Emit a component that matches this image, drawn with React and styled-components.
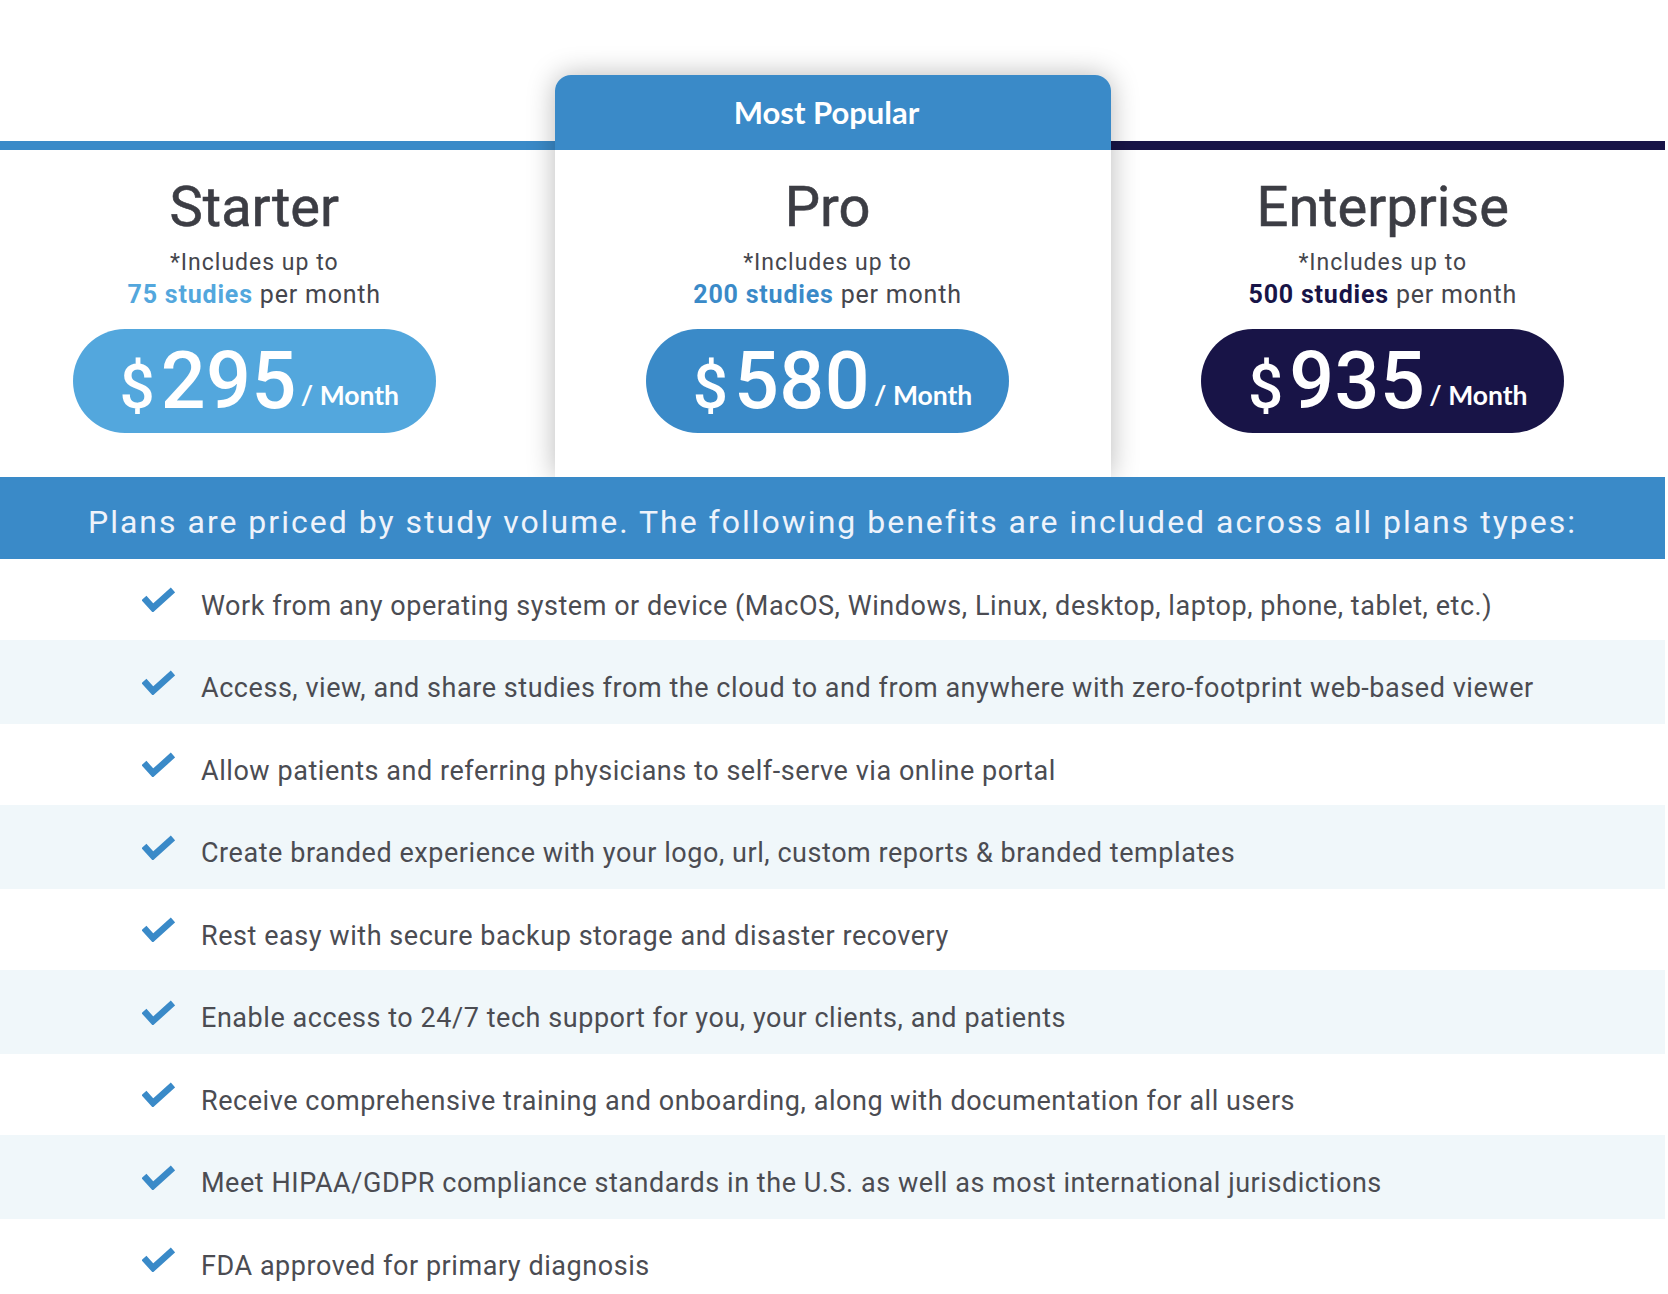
import React from 'react'
import styled, { createGlobalStyle } from 'styled-components'

const GlobalStyle = createGlobalStyle`
  body {
    margin: 0;
    background: #fff;
    font-family: Roboto, "Liberation Sans", sans-serif;
    overflow: hidden;
  }
`

const Page = styled.div`
  width: 1665px;
`

const Plans = styled.section`
  display: grid;
  grid-template-columns: 1fr 556px 1fr;
  padding-top: 75px;
`

const Column = styled.div`
  margin-top: ${(p) => (p.line ? 66 : 0)}px;
  border-top: ${(p) => (p.line ? `9px solid ${p.line}` : 'none')};
  padding-right: ${(p) => p.padRight || 0}px;
  display: flex;
  flex-direction: column;
  align-items: center;
`

const Card = styled.div`
  position: relative;
  z-index: 1;
  background: #fff;
  border-radius: 16px 16px 0 0;
  box-shadow: 0 0 28px rgba(0, 0, 0, 0.28);
`

const CardHeader = styled.div`
  height: 75px;
  padding-right: 12px;
  border-radius: 16px 16px 0 0;
  background: #3a8ac8;
  color: #fff;
  font-family: Lato, "Open Sans", sans-serif;
  font-weight: 700;
  font-size: 31px;
  line-height: 75px;
  text-align: center;
`

const Title = styled.h2`
  margin: 22px 0 0;
  font-size: 56px;
  line-height: 70px;
  font-weight: 400;
  letter-spacing: 0;
  color: #3c3d44;
  -webkit-text-stroke: 0.6px #3c3d44;
`

const Includes = styled.div`
  margin-top: 5px;
  font-size: 23px;
  line-height: 32px;
  letter-spacing: 1px;
  color: #45464d;
  text-align: center;
`

const Volume = styled.div`
  font-size: 25px;
  line-height: 32px;
  letter-spacing: 0.8px;
  color: #45464d;
  text-align: center;

  strong {
    font-weight: 700;
    color: ${(p) => p.accent};
  }
`

const Pill = styled.div`
  margin: 18px 0 44px;
  width: 363px;
  height: 104px;
  border-radius: 52px;
  background: ${(p) => p.accent};
  color: #fff;
  font-size: 79px;
  line-height: 104px;
  text-align: center;
  padding-left: 10px;
  box-sizing: border-box;
  white-space: nowrap;
`

const Dollar = styled.span`
  font-size: 62px;
  font-weight: 500;
  margin-right: 6px;
`

const Amount = styled.span`
  font-weight: 500;
  letter-spacing: 0.5px;
`

const Per = styled.span`
  font-family: Lato, "Open Sans", sans-serif;
  font-weight: 700;
  font-size: 26.5px;
  margin-left: 4px;
  vertical-align: 3px;
`

const Banner = styled.div`
  position: relative;
  z-index: 2;
  height: 82px;
  box-sizing: border-box;
  padding-top: 9px;
  background: #3a8ac8;
  color: #eef3fb;
  font-size: 32px;
  line-height: 73px;
  letter-spacing: 2px;
  text-align: center;
  white-space: nowrap;
`

const Features = styled.ul`
  list-style: none;
  margin: 0;
  padding: 0;
`

const Feature = styled.li`
  display: flex;
  align-items: center;
  gap: 26px;
  height: ${(p) => (p.tinted ? 84 : 81)}px;
  box-sizing: border-box;
  padding: 12px 0 0 142px;
  background: ${(p) => (p.tinted ? '#f0f7fa' : '#fff')};
  font-size: 27px;
  letter-spacing: 0.55px;
  color: #4b4c52;
  white-space: nowrap;
`

const Check = styled.svg`
  flex: none;
  width: 33px;
  height: 25px;
  margin-bottom: 12px;
`

const plans = [
  { name: 'Starter', studies: '75', price: '295', accent: '#53a7dd', line: '#3a8ac8', padRight: 46 },
  { name: 'Pro', studies: '200', price: '580', accent: '#3a8ac8', padRight: 10, popular: true },
  { name: 'Enterprise', studies: '500', price: '935', accent: '#181447', line: '#181447', padRight: 10 },
]

const features = [
  'Work from any operating system or device (MacOS, Windows, Linux, desktop, laptop, phone, tablet, etc.)',
  'Access, view, and share studies from the cloud to and from anywhere with zero-footprint web-based viewer',
  'Allow patients and referring physicians to self-serve via online portal',
  'Create branded experience with your logo, url, custom reports & branded templates',
  'Rest easy with secure backup storage and disaster recovery',
  'Enable access to 24/7 tech support for you, your clients, and patients',
  'Receive comprehensive training and onboarding, along with documentation for all users',
  'Meet HIPAA/GDPR compliance standards in the U.S. as well as most international jurisdictions',
  'FDA approved for primary diagnosis',
]

const PlanBody = ({ plan }) => (
  <Column line={plan.popular ? null : plan.line} padRight={plan.padRight}>
    <Title>{plan.name}</Title>
    <Includes>*Includes up to</Includes>
    <Volume accent={plan.accent}>
      <strong>{plan.studies} studies</strong> per month
    </Volume>
    <Pill accent={plan.accent}>
      <Dollar>$</Dollar>
      <Amount>{plan.price}</Amount>
      <Per>/ Month</Per>
    </Pill>
  </Column>
)

const CheckIcon = () => (
  <Check viewBox="0 0 33 25">
    <polyline
      points="2,11 11,21 31,3"
      fill="none"
      stroke="#3a8ac8"
      strokeWidth="6.5"
      strokeLinejoin="miter"
    />
  </Check>
)

const App = () => (
  <Page>
    <GlobalStyle />
    <Plans>
      {plans.map((plan) =>
        plan.popular ? (
          <Card key={plan.name}>
            <CardHeader>Most Popular</CardHeader>
            <PlanBody plan={plan} />
          </Card>
        ) : (
          <PlanBody key={plan.name} plan={plan} />
        )
      )}
    </Plans>
    <Banner>
      Plans are priced by study volume. The following benefits are included across all plans types:
    </Banner>
    <Features>
      {features.map((text, i) => (
        <Feature key={i} tinted={i % 2 === 1}>
          <CheckIcon />
          <span>{text}</span>
        </Feature>
      ))}
    </Features>
  </Page>
)

export default App
